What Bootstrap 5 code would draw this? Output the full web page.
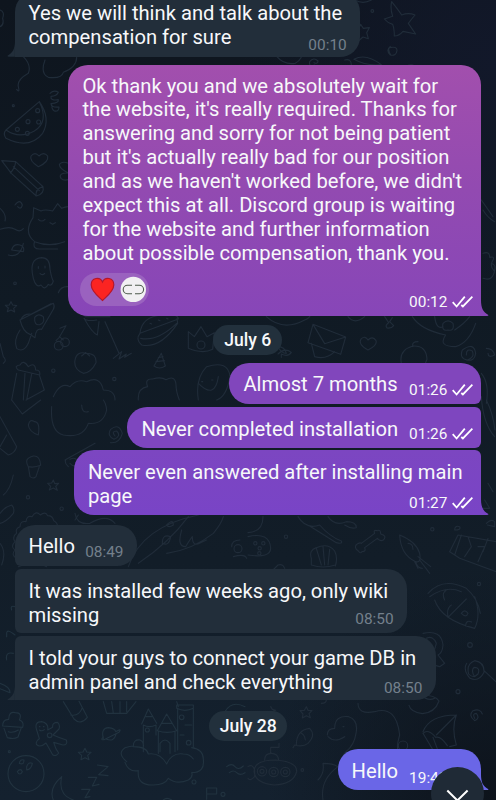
<!DOCTYPE html>
<html lang="en">
<head>
<meta charset="utf-8">
<meta name="viewport" content="width=device-width, initial-scale=1">
<title>Chat</title>
<link href="https://cdn.jsdelivr.net/npm/bootstrap@5.3.0/dist/css/bootstrap.min.css" rel="stylesheet">
<style>
  body { background:#111a24; font-family:Roboto,"Noto Sans",sans-serif; color:#f7f8fa; }
  .chat { width:496px; height:800px; background:
    radial-gradient(circle at 100% 8%, #12182a 0, rgba(18,24,42,0) 260px),
    radial-gradient(circle at 100% 100%, #0d131b 0, rgba(13,19,27,0) 230px),
    linear-gradient(180deg,#0e151e 0,#101a24 38%,#121d28 70%,#14212f 100%); }
  .doodles { inset:0; fill:none; stroke:#202c39; stroke-width:3.4; stroke-linecap:round; stroke-linejoin:round; }
  .feed { margin-top:-8px; }
  .msg { --drop:1.5px; font-size:20.2px; line-height:23.9px; padding:calc(8.4px + var(--drop)) 13.5px calc(8px - var(--drop)) 14px; white-space:nowrap; }
  .msg .line { display:block; width:max-content; }
  .incoming { margin-left:14.5px; background:#222e3a; border-radius:6px 20px 20px 6px; }
  .outgoing { margin-left:auto; margin-right:14.6px; padding-right:8px; border-radius:20px 6px 6px 20px; }
  .stamp { font-size:15.4px; line-height:16px; margin-bottom:calc(var(--drop) - 4.5px); }
  .stamp.up { margin-bottom:calc(var(--drop) - 2.5px); }
  .incoming .stamp { color:#74808c; }
  .ticks { width:21px; height:12px; margin-left:5px; fill:none; stroke:#fff; stroke-width:1.8; }
  .tail-end::after, .tail-start::after { content:""; position:absolute; bottom:0; width:8px; height:16px; background:inherit; }
  .tail-end::after { left:calc(100% - .4px); clip-path:path("M0 0C0 8 2 12 7.4 15Q7.6 16 6 16H0Z"); background:var(--tail); }
  .tail-start::after { right:calc(100% - .4px); clip-path:path("M8 0C8 8 6 12 .6 15Q.4 16 2 16H8Z"); }
  .tail-end { border-bottom-right-radius:0; }
  .tail-start { border-bottom-left-radius:0; }
  .first-in { border-top-left-radius:20px; }
  .first-out { border-top-right-radius:20px; }
  .m1 { width:345.7px; height:64.7px; }
  .m2 { --drop:1.2px; width:413px; height:251px; margin-top:8.3px; background:linear-gradient(#a24fad,#924ab1 50%,#8746b8); --tail:#8746b8; }
  .m3 { --drop:1px; width:252px; height:40.4px; margin-top:8.3px; background:#8146bc; }
  .m4 { --drop:2px; width:354px; height:41px; margin-top:3.2px; background:#7e46bf; }
  .m5 { --drop:2.6px; width:407.5px; height:64.7px; margin-top:2.7px; background:linear-gradient(#7c46c1,#7944c6); --tail:#7944c6; }
  .m6 { --drop:1px; width:122.5px; height:41px; margin-top:9.8px; }
  .m7 { --drop:2.6px; width:392.6px; height:64.7px; margin-top:2.7px; }
  .m8 { --drop:2.8px; width:421.3px; height:64.5px; margin-top:2.7px; }
  .m9 { --drop:2px; width:143.8px; height:41px; margin-top:8.4px; background:#6a66e7; --tail:#6a66e7; }
  .m4 .stamp, .m6 .stamp { margin-bottom:calc(var(--drop) - 1.8px); }
  .m8 .stamp { margin-bottom:calc(var(--drop) - 4.2px); }
  .m9 .stamp { margin-bottom:calc(var(--drop) - 4px); }
  .day { height:29.7px; border-radius:15px; background:#22303c; font-size:17.6px; font-weight:500; line-height:30px; text-align:center; }
  .day-a { width:69px; margin:9.2px 0 0 213.3px; }
  .day-b { width:78px; margin:10.6px 0 0 209.3px; }
  .reaction { width:69px; height:33px; margin:7.1px 0 0 -2.4px; border-radius:17px; background:#9a62bf; }
  .m2 .stamp { margin-bottom:-4px; }
  .to-bottom { left:431px; top:767px; width:53px; height:53px; background:#1f2a36; }
</style>
<script src="https://cdn.jsdelivr.net/npm/bootstrap@5.3.0/dist/js/bootstrap.bundle.min.js"></script>
</head>
<body class="m-0 overflow-hidden">
<main class="chat position-relative overflow-hidden">
  <svg class="doodles position-absolute" width="496" height="800" viewBox="0 0 1488 2400" aria-hidden="true">
    <!-- top left: worm, melon, sweet, heart, pencil -->
    <path d="M70 170q25 25 15 50q-35 20-30 40q5 20-5 8M135 180q-15 40 10 52q40 5 45-15q40-15 40-45M0 30q15 5 8 25q5 20-8 25"/>
    <path d="M118 305q35 50 10 95q-40 50-110 15q-10-15 0-25zM118 305q30 60-15 88q-45 25-85-3"/>
    <circle cx="84" cy="365" r="6"/><circle cx="113" cy="332" r="6"/><circle cx="52" cy="388" r="6"/><circle cx="82" cy="400" r="6"/><circle cx="116" cy="366" r="6"/><circle cx="40" cy="317" r="3"/>
    <path d="M150 280q12-12 25-3q-5 12-22 12q-3 14 22 10q3 10-22 12q0 12 24 10q0 15-14 12q-8-4-8-20M115 500q-28-18-22-32q12-14 24 0q14-14 26 0q4 18-28 32zM5 482l42 3l82 75q5 22-20 28l-75-68zM47 485q-2 20-16 34M40 500l78 72M108 588q-2-22 21-28M205 490q-18-8-27 3q0 14 27 26q-32 0-22 16q8 8 22 4"/>
    <!-- top right: hat, faces, star, swirl, leaf -->
    <g transform="translate(744 0)">
      <path d="M128 95q-12-30 10-60q25-20 35-35M205 0q20 40 22 72q35-6 45 20q5 35-40 55q-40 18-85 8q-12-8 5-16q45 0 65-22q-5-20 10-45M95 115q30-25 55 5q15-5 12 15q8 40-20 55q-35 5-55-20M98 128q8 10 16 0M128 128q8 10 16 0M108 158q14 8 28 0M200 195q-18 8-15-10q12-15 25-2q0 10-12 5M310 195q0-20-20-15"/>
      <path d="M350 73l8 12l18-2l-8 15l5 18l-16-5l-14 12v-18l-20-10l20-6z" transform="translate(-12 0)"/>
      <path d="M431 5q20 25 30 40q20-8 40 0q-15 18-20 25q10 15 22 32l-38-8q-12 14-26 14q0-22-5-35q-15-4-25-16l25-8q-8-24-3-44zM428 165q-10-20-3-22q22-5 22 8q-2 18-20 14q-15-14 0-26M318 178q35-20 82 16q-45 5-82-16zM320 0q25 14 50 0M450 220q25-30 45-25M455 240q15 30 40 10M460 380q35 20 25 45q-20 15-30 0M465 500q-15 20 0 40"/>
      <circle cx="373" cy="33" r="4"/><circle cx="206" cy="12" r="5"/>
    </g>
    <!-- left: cat, planet, ghost, star, pizza, cherries -->
    <g transform="translate(0 600)">
      <path d="M205 20q-10 0-20 5l-12-14l-15 22q-25-6-35 0l-22-10l-2 30q-30 45 5 72q45 18 90 0M115 58q10 10 20 0M150 68l8 5l8-5M103 127q-5 20 15 20h55M45 15q15-20 22 0q-4 16-14 5M0 88q30-10 45 0t25-2M0 25q20 18 15 38M35 150q5-20 25-15q15 5 10 20zM25 165q35 10 45-35M100 235q-15-60 25-62q25 0 25 35q5 28 10 35q-5 18-15 10q-10 20-22 2q-15 10-23-20zM115 200v5M135 198v6M120 220q8 8 14 0M175 278q8-20 30-18"/>
      <circle cx="45" cy="250" r="4"/>
      <path d="M33 305l5 10l12 2l-9 8l3 11l-11-6l-11 5l3-11l-9-8l12-1zM60 360l100-50q5 10 0 18l-35 60q-18-5-20 25l-15-10q-20-5-30-43zM63 358q10-18 30-15l60-32M60 390q-20 30-10 55q20 15 35-15l10-30M130 350q-15-12-26 2q-2 25 15 22q16-4 11-24M180 385l18-8l-20 35l-10 10M178 410l12 10"/>
      <circle cx="176" cy="437" r="13"/><circle cx="195" cy="427" r="13"/>
      <path d="M255 350h75M290 360q-30 5-38-5q25 45 40 50l5-40M315 365l42 95M340 475l25-20l-8 22l22-15l-5 10l20-12M420 400q5-50 65-55q50-5 50 12zM420 400q-15 18 5 35q55 12 108-65l-2-15M422 415q50 10 108-45M450 370l5 2M475 360l5 2M500 355l4 2M565 445v-50l18 15l20-30l18 30l22-12l-5 50q-30 15-73-3z"/>
      <circle cx="603" cy="435" r="12"/>
      <path d="M225 480q5-28 35-20q30 0 28 28q-15 30-38 32q-30-12-25-40M245 468l12-10l12 10M462 498l22-38l12 38q-18 12-34 0zM468 485l25-3M475 473l14-3M0 430l10 40q12 12 0 20M55 510q-15-12 5-15q10-18 25 5q20-15 22 10q15 0 12 15zM50 520l-15 80M118 525l15 45l-55 30M75 520l-5 80M95 522l-15 78M160 590q20-45 50-30q20-25 50-15q40-20 50 25q35 0 35 30M415 600q-3-35 28-40q-10-25 15-23q25-8 40 2q28-15 30 15q0 20 10 46M595 600q-10-65 25-100q65-20 70 30q-10 60-40 70M595 550q50 50 60-20M605 545h3M635 540h4"/>
      <circle cx="160" cy="512" r="5"/><circle cx="343" cy="537" r="5"/>
    </g>
    <!-- right: envelope, heart, apple, swirl, animals -->
    <g transform="translate(744 600)">
      <path d="M55 350q50 45 115 10q15-5 20-20M300 350q20 25 50 0M410 350l12 18q-12 8-5 16q14 2 20-7l-12-12l8-12M195 373l98 38l-15 52l-98-35zM195 373l35 58l63-20M190 430l10 40q35 10 60-15M360 450q-32-18-20-34q12-10 20 4q14-14 24 2q5 14-24 28M460 490q-8-40 35-52q40-2 42 40q-5 12-10 25M495 440q-5-15 15-15M90 440q20 0 25 20q-15 0-25-20M90 462q20-20 40-5q-10 15-30 5v10M655 465q0-22 18-12q8 20-15 27q-25-5-15-30q35-25 40 10q-3 25-28 20M493 350q25 40 100 55q-25 35 30 35q40-12 60-70M585 370q15-15 30 0q5 25-15 20q-20 5-15-20M560 350q5 40 25 30M620 390q30-20 45-40M715 445q20 0 25 20q-20 10-20-5M705 160q20-8 20 12q18-5 8 12q-8 15 5 28M705 30q15 25 35 35M705 235q30 10 35-25q5-15-10-20M700 0l35 50"/>
      <path d="M700 520q25 30 15 90M715 600q20 40 26 90M700 590q5 80 40 120"/>
    </g>
    <!-- middle left: bear, strawberry, swirl, cupcake, monster -->
    <g transform="translate(0 1200)">
      <path d="M35 0l32 42l55-42M155 20q-5 75 35 85q60 10 75-35q45 5 55-40q-2-20-10-30M245 15q0 25 20 20M0 50l50 90q-5 20-25 25l-25-20M0 140l20-35M85 75q5-20 18-10q18 0 12 40q-28-10-30-30M345 108q-12-15 5-15q15 15-8 25q-22-10-10-30q25-20 35 12q-8 30-35 28M195 180q55-30 90-50M205 200q-12-10-8-20M210 178q20-10 25 12q-12 15-25 0M85 200q-15-25 15-32q20-2 22 28q-20 8-37 4l5 30q10 8 18 0l10-30M160 240l4 11l12-1l-9 9l5 12l-12-7l-12 6l4-11l-9-9l12-1zM40 225q-10 45-30 60M0 340q15-20 35-25q10 10 5 25q-20 25-40 30"/>
      <circle cx="84" cy="292" r="5"/><circle cx="185" cy="326" r="5"/>
      <path d="M50 475q-18-10-5-25q-15-10 0-25q-10-15 5-25q-5-15 10-20q0-18 18-15q2-20 18-15q12-20 25-5q15-12 22 2q15 0 18 15q12 5 12 20M225 340q5 35 45 30q50-30 75 0M235 345l-10 15M385 500q40-120 210-155M415 490q90-60 150-140M500 375q20-20 20 0q-15 10-20 0M487 430q0-30 25-20q-5 30-25 20M545 390q-15 50 12 50q12-20 20-30q0 30 22 20l20-10M500 460q75-10 140-60q25-30 30-50M695 440q0-20 25-20M700 470q35-10 40 5M0 430q20 25 5 65M55 500q50-20 85 0"/>
      <circle cx="714" cy="446" r="12"/>
    </g>
    <!-- middle right: game pad, bone, squid, shell, chocolate -->
    <g transform="translate(744 1200)">
      <path d="M0 410q65-15 68 35q0 30-68 20M45 350q0 45-45 48"/>
      <circle cx="22" cy="430" r="5"/><circle cx="35" cy="445" r="5"/><circle cx="46" cy="430" r="5"/><circle cx="34" cy="460" r="5"/><circle cx="114" cy="410" r="5"/>
      <path d="M150 350q25 40 65 25q30 35 65 48q5 10-15 5l-80-50M240 350q20 30 55 15q30 0 30 18q-15 5-35-8M340 430l40-30q-5-12 8-8q10-5 10 10q20 5 8 18q-10 5-18-5l-38 28q5 12-8 12q-5 8-12-3q-12-8-5-18q10-8 15-4M190 495v-20q-8-25 15-32q35-15 55 10q10 20 2 45M205 445l15 50M225 440l5 55M245 448l-5 47M190 495q35 12 72 0M455 405q50 20 60 55q5 30-12 25q-45-20-48-80M500 485l10 20M515 480l30 40M510 470l38 30M503 485q5 20 20 20M480 430q15 0 15 18M75 510l15-15q15-5 20 10M605 455l25-50l115 20M605 455l30 20l110 40M640 405l-20 60M660 410l10 30l-20 30M720 415l-15 40M690 440h20l-20 45M620 390q0-15 15-10q5 10-15 10M710 300l15 25h-20M715 370q15-15 25-5v15l-22-5M720 250l15 25"/>
      <circle cx="553" cy="388" r="5"/><circle cx="693" cy="552" r="5"/>
      <path d="M540 580q45-50 115-15q35 30 42 75M545 590q50-35 95-15M590 600q-10-20 5-30M560 600q20 60 120 85q20-40 0-95M600 650q-5-25 10-35M600 652l55-55M640 640q10-15 20 0q-5 15-20 0M653 678q0-20 18-12M525 700q55-12 60 35q-2 25-15 30l20 25l-15 10l-35-10M535 715q20-10 30 15l-10 35M495 885q65-5 78 18q-12 35-50 38q-35-5-40-25M520 885q20 20 40 10M680 830q-12-18-2-28q20 0 12 20q-15 15-28 0q-8-30 18-40q30 5 28 35q-15 30-42 18q-22-25-10-45M708 812l38 35"/>
      <circle cx="666" cy="735" r="7"/><circle cx="630" cy="875" r="6"/>
    </g>
    <!-- bottom left: cupcake, gingerbread man, planet, castle on a cloud, ball, moon -->
    <g transform="translate(0 1800)" stroke="#21323f">
      <path d="M35 30q-5-15 10-10M45 105q-25-20-25-5v10M20 180q-5-25 20-20M0 250q30 10 30 28l-30-12M190 305l32 52q20 20 40-5l-25-48M212 345q25 5 35-22M310 305l10 35h60l28-35M335 305l5 35M360 305v35M380 305v30M8 378q0-20 18-20q0-25 20-20q22 0 12 22q15 5 10 22zM12 385l10 28q20 6 32-2l10-28M25 395q15 5 30-5M110 390q-8-25 15-25q22 5 18 25l15-8q-2-15 15-15q8 8 4 20l-18 18q18 8 40 15q5 15-10 15l-28-8q5 20 15 32q-8 12-18 5l-20-35q-18 15-28 5q-5-10 8-18zM118 380h2M130 380h2M118 390q8 5 15-1M310 415q-8-30 15-32q20 2 22 12q20-12 10 2l-45 22q-12 2-2-8M320 418q22 8 28-15M255 445l5 11l13 1l-10 9l4 13l-12-6l-12 6l2-13l-10-9l14-1z"/>
      <circle cx="78" cy="521" r="54"/><circle cx="28" cy="455" r="3"/><circle cx="149" cy="406" r="7"/>
      <path d="M58 490q2-14 14-10q0 16-14 10M80 500q5-15 17-10q-3 18-17 20zM52 515q10-12 15 0q-8 14-15 0M185 530q-12 55 35 70M185 530q-40 35-25 70M245 568h25l-15 25l15-3M265 532h25l-13 26l20-5M292 495l32 5l-28 24l28 3"/>
      <path d="M380 485q-30-25-5-42q15-5 25-5q0-20 20-18q12 5 10 20M375 487q10 30 40 25q-5 45 45 43q35 0 45-20q25 20 60 5q15-10 10-22q40 0 35-40q0-30-35-35M400 440q40 0 45 22q35-5 55 30q15-35 50-30q20 0 30 15M430 455v-80q18 10 38 0v30M425 372l20-45l25 43M472 392l28-50l30 50q-28 10-58 0M475 395v65M525 395v60M480 455v-25q15-20 30 0v30M533 450V325M580 440V325M530 325q25 12 50 0v-10h-50zM530 305l5 15M435 350h20M485 370h30M555 375h20M540 405h12"/>
      <circle cx="442" cy="390" r="6"/><circle cx="545" cy="352" r="7"/><circle cx="566" cy="428" r="7"/><circle cx="582" cy="546" r="6"/><circle cx="669" cy="583" r="6"/>
      <path d="M680 500q15-12 25 0t25-2M688 518q12-10 22 0t25 0M620 598v-34h30v18h-30M675 335q20-35 60-15M490 600q10-10 25 0"/>
    </g>
    <!-- bottom right: stars, fish, dinosaur, umbrella, submarine -->
    <g transform="translate(744 1800)">
      <path d="M175 320l5 11l12 1l-9 9l4 12l-12-6l-12 7l2-12l-9-10l13-1zM68 320l5 8l10 3l-12 5M145 435q0-45 40-50q20 20-5 45q-15 12-40 5l-5 8M160 400q10 5 12 20M238 405q0-20 22-20q0-40 42-35q30 10 22 50q-5 35-30 55q-15 15-15 45M240 410q20 20 50 0M225 600q-10-60 45-100q-15-10-45-10q5 30-15 50M285 380h3M330 310q0 35 50 25q65-20 75 70q-10 35-5 45M525 395q20-50 100-50q-15 40 0 90l-20 5M525 400q15-15 38 12q15-5 35 25M525 400l30 50M625 345l-60 60M555 412l15 40M680 355q-8-15 5-15q12 15-5 22q-20-15-5-30q22-8 28 10M18 515q0-35 65-35q65 5 63 35q-10 38-68 40q-55-5-60-40M50 480q0-20 20-20q20 0 22 20M68 460v-18h25v-12M0 500q12-10 20 10v20q-15 15-20 5M220 310q15 0 15-10"/>
      <circle cx="42" cy="514" r="14"/><circle cx="77" cy="516" r="14"/><circle cx="112" cy="516" r="14"/><circle cx="42" cy="514" r="6"/><circle cx="77" cy="516" r="6"/><circle cx="112" cy="516" r="6"/><circle cx="163" cy="510" r="4"/><circle cx="465" cy="437" r="14"/>
    </g>
  </svg>

  <section class="feed position-relative d-flex flex-column">
    <div class="msg incoming tail-start first-in m1 position-relative">
      <span class="line">Yes we will think and talk about the</span>
      <div class="d-flex justify-content-between align-items-end"><span class="line">compensation for sure</span><span class="stamp">00:10</span></div>
    </div>

    <div class="msg outgoing tail-end first-out m2 position-relative">
      <span class="line">Ok thank you and we absolutely wait for</span>
      <span class="line">the website, it's really required. Thanks for</span>
      <span class="line">answering and sorry for not being patient</span>
      <span class="line">but it's actually really bad for our position</span>
      <span class="line">and as we haven't worked before, we didn't</span>
      <span class="line">expect this at all. Discord group is waiting</span>
      <span class="line">for the website and further information</span>
      <span class="line">about possible compensation, thank you.</span>
      <div class="d-flex justify-content-between align-items-end">
        <div class="reaction">
          <svg class="d-block" width="69" height="33" viewBox="0 0 69 33" role="img" aria-label="Heart reaction">
            <path d="M22.5 27.5C19 24 11.2 18.5 11.2 11.8C11.2 4.5 20 3.3 22.5 9C25 3.3 33.8 4.5 33.8 11.8C33.8 18.5 26 24 22.5 27.5Z" fill="#fb2422" stroke="#b5172b" stroke-width="1.2"/>
            <circle cx="53.3" cy="16.4" r="12.7" fill="#f1f0f2"/>
            <path d="M52 12.3h-4.6a4.2 4.2 0 0 0 0 8.4H52M55 12.3h4.4a4.2 4.2 0 0 1 0 8.4H55" fill="none" stroke="#4e5a4c" stroke-width="1.1"/>
          </svg>
        </div>
        <div class="d-flex align-items-center stamp">00:12<svg class="ticks" viewBox="0 0 21 12"><path d="M.7 6.2L4.6 10.5L12.8.7M9.3 9L10.9 10.5L20.4.7"/></svg></div>
      </div>
    </div>

    <div class="day day-a">July 6</div>

    <div class="msg outgoing first-out m3 d-flex justify-content-between align-items-end"><span class="line">Almost 7 months</span><div class="d-flex align-items-center stamp up">01:26<svg class="ticks" viewBox="0 0 21 12"><path d="M.7 6.2L4.6 10.5L12.8.7M9.3 9L10.9 10.5L20.4.7"/></svg></div></div>
    <div class="msg outgoing m4 d-flex justify-content-between align-items-end"><span class="line">Never completed installation</span><div class="d-flex align-items-center stamp up">01:26<svg class="ticks" viewBox="0 0 21 12"><path d="M.7 6.2L4.6 10.5L12.8.7M9.3 9L10.9 10.5L20.4.7"/></svg></div></div>
    <div class="msg outgoing tail-end m5 position-relative">
      <span class="line">Never even answered after installing main</span>
      <div class="d-flex justify-content-between align-items-end"><span class="line">page</span><div class="d-flex align-items-center stamp">01:27<svg class="ticks" viewBox="0 0 21 12"><path d="M.7 6.2L4.6 10.5L12.8.7M9.3 9L10.9 10.5L20.4.7"/></svg></div></div>
    </div>

    <div class="msg incoming first-in m6 d-flex justify-content-between align-items-end"><span class="line">Hello</span><span class="stamp up">08:49</span></div>
    <div class="msg incoming m7">
      <span class="line">It was installed few weeks ago, only wiki</span>
      <div class="d-flex justify-content-between align-items-end"><span class="line">missing</span><span class="stamp up">08:50</span></div>
    </div>
    <div class="msg incoming tail-start m8 position-relative">
      <span class="line">I told your guys to connect your game DB in</span>
      <div class="d-flex justify-content-between align-items-end"><span class="line">admin panel and check everything</span><span class="stamp">08:50</span></div>
    </div>

    <div class="day day-b">July 28</div>

    <div class="msg outgoing first-out tail-end m9 position-relative d-flex justify-content-between align-items-end"><span class="line">Hello</span><div class="d-flex align-items-center stamp">19:42<svg class="ticks" viewBox="0 0 21 12"><path d="M.7 6.2L4.6 10.5L12.8.7M9.3 9L10.9 10.5L20.4.7"/></svg></div></div>
  </section>

  <button class="to-bottom position-absolute border-0 rounded-circle p-0" type="button" aria-label="Scroll to bottom">
    <svg class="d-block" width="53" height="53" viewBox="0 0 53 53" fill="none" stroke="#fff" stroke-width="2"><path d="M16.3 23.5L26.4 33.5L36.6 23.5"/></svg>
  </button>
</main>
</body>
</html>
